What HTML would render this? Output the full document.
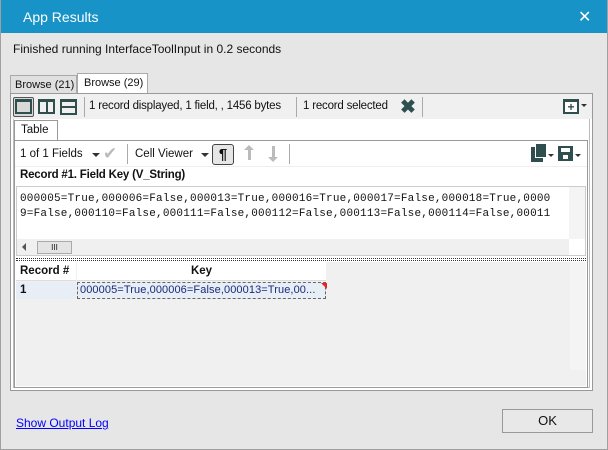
<!DOCTYPE html>
<html><head><style>
*{box-sizing:border-box;margin:0;padding:0}
body{width:608px;height:450px;overflow:hidden;background:#e6e6e6;font-family:"Liberation Sans",sans-serif;font-size:11.5px;color:#111;position:relative}
.a{position:absolute;white-space:nowrap}
.mono{font-family:"Liberation Mono",monospace;font-size:11px;letter-spacing:0.2px}
.sep{position:absolute;width:1px;background:#aaa}
</style></head><body>
<div class="a" style="left:0;top:0;width:608px;height:450px;border:1px solid #a0a0a0"></div>
<div class="a" style="left:1px;top:0;width:606px;height:33px;background:#1793c7"></div>
<div class="a" style="left:23px;top:9px;color:#fff;font-size:14px">App Results</div>
<div class="a" style="left:578px;top:7px;color:#fff;font-size:16px">✕</div>
<div class="a" style="left:13px;top:42px;font-size:12px">Finished running InterfaceToolInput in 0.2 seconds</div>
<!-- tabs -->
<div class="a" style="left:10px;top:75px;width:67px;height:19px;border:1px solid #aaa;border-bottom:none;background:#e0e0e0;padding:3px 0 0 4px;font-size:11px">Browse (21)</div>
<div class="a" style="left:77px;top:73px;width:71px;height:21px;border:1px solid #aaa;border-bottom:none;background:#fff;padding:3px 0 0 6px;font-size:11px">Browse (29)</div>
<!-- outer panel -->
<div class="a" style="left:10px;top:93px;width:583px;height:298px;border:1px solid #999;background:#fff"></div>
<div class="a" style="left:13px;top:96px;width:577px;height:292px;border:1px solid #bbb"></div>
<div class="a" style="left:11px;top:94px;width:581px;height:25px;background:#f0f0f0"></div>
<!-- layout icons -->
<div class="a" style="left:13px;top:97px;width:21px;height:20px;border:1px solid #555;background:#d8d8d8;border-radius:2px"></div>
<div class="a" style="left:15px;top:99px;width:17px;height:15px;border:2px solid #2f4f4f;border-top-width:3px"></div>
<div class="a" style="left:38px;top:99px;width:17px;height:15px;border:2px solid #2f4f4f;border-top-width:3px"></div>
<div class="a" style="left:46px;top:100px;width:2px;height:13px;background:#2f4f4f"></div>
<div class="a" style="left:60px;top:99px;width:17px;height:16px;background:#2f4f4f"></div>
<div class="a" style="left:62px;top:102px;width:13px;height:4px;background:#f0f0f0"></div>
<div class="a" style="left:62px;top:108px;width:13px;height:5px;background:#f0f0f0"></div>
<div class="sep" style="left:84px;top:97px;height:20px"></div>
<div class="a" style="left:89px;top:100px;letter-spacing:-0.2px">1 record displayed, 1 field, , 1456 bytes</div>
<div class="sep" style="left:296px;top:97px;height:20px"></div>
<div class="a" style="left:303px;top:100px;letter-spacing:-0.2px">1 record selected</div>
<div class="a" style="left:400px;top:96px;font-size:19px;font-weight:bold;color:#2f4f4f">✖</div>
<div class="sep" style="left:422px;top:97px;height:20px"></div>
<div class="a" style="left:563px;top:99px;width:16px;height:15px;background:#2f4f4f"></div>
<div class="a" style="left:565px;top:102px;width:12px;height:10px;background:#fff;color:#2f4f4f;font-weight:bold;font-size:12px;line-height:10px;text-align:center">+</div>
<div class="a" style="left:581px;top:104px;border:3px solid transparent;border-top:3px solid #333;border-bottom:none"></div>
<!-- inner tab -->
<div class="a" style="left:14px;top:120px;width:44px;height:21px;border:1px solid #999;border-bottom:none;background:#fff;padding:3px 0 0 6px">Table</div>
<div class="a" style="left:14px;top:140px;width:574px;height:248px;border:1px solid #999;background:#fff"></div>
<div class="a" style="left:20px;top:148px">1 of 1 Fields</div>
<div class="a" style="left:92px;top:153px;border:4px solid transparent;border-top:4px solid #333;border-bottom:none"></div>
<div class="a" style="left:103px;top:144px;font-size:17px;color:#bbb">✔</div>
<div class="sep" style="left:127px;top:144px;height:20px"></div>
<div class="a" style="left:135px;top:148px">Cell Viewer</div>
<div class="a" style="left:201px;top:153px;border:4px solid transparent;border-top:4px solid #333;border-bottom:none"></div>
<div class="a" style="left:212px;top:144px;width:22px;height:21px;border:1px solid #444;border-radius:3px;background:#e6e6e6;text-align:center;font-size:15px;line-height:19px;font-weight:bold">¶</div>
<div class="a" style="left:248px;top:147px;width:3px;height:13px;background:#bbb"></div>
<div class="a" style="left:244px;top:145px;border:5px solid transparent;border-bottom:5px solid #bbb;border-top:none"></div>
<div class="a" style="left:272px;top:146px;width:3px;height:13px;background:#bbb"></div>
<div class="a" style="left:268px;top:157px;border:5px solid transparent;border-top:5px solid #bbb;border-bottom:none"></div>
<div class="sep" style="left:289px;top:144px;height:20px"></div>
<div class="a" style="left:531px;top:147px;width:12px;height:15px;background:#2f4f4f"></div>
<div class="a" style="left:535px;top:144px;width:11px;height:14px;background:#2f4f4f;border-left:1px solid #fff;border-bottom:1px solid #fff"></div>
<div class="a" style="left:548px;top:154px;border:3px solid transparent;border-top:3px solid #333;border-bottom:none"></div>
<div class="a" style="left:558px;top:146px;width:15px;height:15px;background:#2f4f4f"></div>
<div class="a" style="left:561px;top:148px;width:9px;height:4px;background:#fff"></div>
<div class="a" style="left:563px;top:155px;width:5px;height:4px;background:#fff"></div>
<div class="a" style="left:575px;top:154px;border:3px solid transparent;border-top:3px solid #333;border-bottom:none"></div>
<div class="a" style="left:15px;top:166px;width:572px;height:1px;background:#eee"></div>
<div class="a" style="left:20px;top:169px;font-weight:bold;letter-spacing:-0.2px">Record #1. Field Key (V_String)</div>
<!-- text box -->
<div class="a" style="left:16px;top:186px;width:570px;height:70px;border:1px solid #ccc;background:#fff;overflow:hidden">
<div class="a mono" style="left:3px;top:5px;white-space:pre;line-height:15px">000005=True,000006=False,000013=True,000016=True,000017=False,000018=True,0000
9=False,000110=False,000111=False,000112=False,000113=False,000114=False,00011</div>
<div class="a" style="left:552px;top:0;width:17px;height:52px;background:#f4f4f4"></div>
<div class="a" style="left:0;top:52px;width:552px;height:17px;background:#f0f0f0"></div>
<div class="a" style="left:20px;top:54px;width:35px;height:13px;border:1px solid #aaa;background:#e4e4e4;font-size:8px;text-align:center;line-height:11px">III</div>
<div class="a" style="left:5px;top:56px;border:4px solid transparent;border-right:4px solid #555;border-left:none"></div>
</div>
<div class="a" style="left:16px;top:258px;width:570px;height:3px;border-top:1px dotted #333;border-bottom:1px dotted #333"></div>
<!-- grid -->
<div class="a" style="left:16px;top:262px;width:570px;height:124px;background:#f0f0f0"></div>
<div class="a" style="left:16px;top:262px;width:60px;height:19px;background:#fff;border-bottom:1px solid #ddd;font-weight:bold;padding:3px 0 0 4px">Record #</div>
<div class="a" style="left:77px;top:262px;width:249px;height:19px;background:#fff;border-bottom:1px solid #ddd;font-weight:bold;text-align:center;padding-top:3px">Key</div>
<div class="a" style="left:16px;top:282px;width:60px;height:17px;background:#e8eef6;font-weight:bold;padding:2px 0 0 4px">1</div>
<div class="a" style="left:77px;top:282px;width:249px;height:17px;background:#e8eef6;border:1px dashed #666;color:#1a2a7a;padding:1px 0 0 2px;font-size:11px;letter-spacing:0.1px;overflow:hidden">000005=True,000006=False,000013=True,00...</div>
<div class="a" style="left:321px;top:283px;border:3px solid transparent;border-top:3px solid #e22;border-right:3px solid #e22"></div>
<div class="a" style="left:570px;top:262px;width:16px;height:108px;background:#f4f4f4"></div>
<!-- bottom -->
<div class="a" style="left:16px;top:416px;color:#00f;text-decoration:underline;font-size:12px">Show Output Log</div>
<div class="a" style="left:502px;top:409px;width:91px;height:24px;border:1px solid #999;background:#e8e8e8;text-align:center;line-height:22px;font-size:13px">OK</div>
</body></html>
